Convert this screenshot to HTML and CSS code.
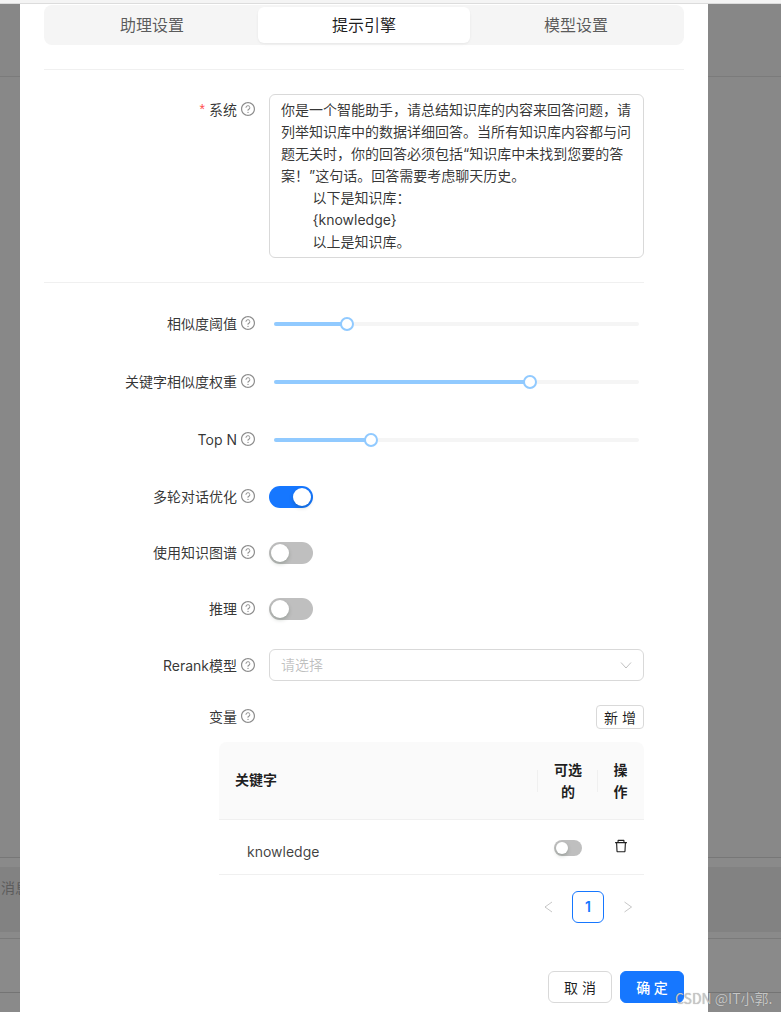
FILE: index.html
```html
<!DOCTYPE html>
<html lang="zh-CN">
<head>
  <meta charset="UTF-8" />
  <title>提示引擎</title>
  <link rel="stylesheet" href="styles.css">
</head>
<body>
  <svg class="icon-defs" width="0" height="0">
    <symbol id="help" viewBox="64 64 896 896">
      <path d="M512 64C264.6 64 64 264.6 64 512s200.6 448 448 448 448-200.6 448-448S759.4 64 512 64zm0 820c-205.4 0-372-166.6-372-372s166.6-372 372-372 372 166.6 372 372-166.6 372-372 372z"/>
      <path d="M623.6 316.7C593.6 290.4 554 276 512 276s-81.6 14.5-111.6 40.7C369.2 344 352 380.7 352 420v7.6c0 4.4 3.6 8 8 8h48c4.4 0 8-3.6 8-8V420c0-44.1 43.1-80 96-80s96 35.9 96 80c0 31.1-22 59.6-56.1 72.7-21.2 8.1-39.2 22.3-52.1 40.9-13.1 19-19.9 41.8-19.9 65.1V620c0 4.4 3.6 8 8 8h48c4.4 0 8-3.6 8-8v-21.3c0-17 10.8-32.5 26.8-38.6 54.5-21 89.6-70.3 89.6-125.1.1-39.3-17.1-76-48.3-103.3z"/>
      <path d="M512 732m-40 0a40 40 0 1 0 80 0 40 40 0 1 0-80 0z"/>
    </symbol>
  </svg>

  <!-- page behind the dialog -->
  <div class="page">
    <div class="browser-bar"></div>
    <div class="page-header"></div>
    <div class="page-main"></div>
    <div class="page-chat">
      <div class="chat-input">消息</div>
    </div>
    <div class="page-footer"></div>
  </div>

  <div class="modal">
    <div class="tabs">
      <div class="tab">助理设置</div>
      <div class="tab active">提示引擎</div>
      <div class="tab">模型设置</div>
    </div>
    <div class="divider tabs-divider"></div>

    <div class="form-row system-row">
      <div class="label raised"><span class="required">*</span>系统<svg class="help"><use href="#help"/></svg></div>
      <textarea class="system-input" readonly>你是一个智能助手，请总结知识库的内容来回答问题，请列举知识库中的数据详细回答。当所有知识库内容都与问题无关时，你的回答必须包括“知识库中未找到您要的答案！”这句话。回答需要考虑聊天历史。
        以下是知识库：
        {knowledge}
        以上是知识库。</textarea>
    </div>
    <div class="divider form-divider"></div>

    <div class="form-row slider-row">
      <div class="label">相似度阈值<svg class="help"><use href="#help"/></svg></div>
      <div class="slider"><div class="track"><div class="fill" style="width: 20%"><span class="handle"></span></div></div></div>
    </div>
    <div class="form-row slider-row">
      <div class="label">关键字相似度权重<svg class="help"><use href="#help"/></svg></div>
      <div class="slider"><div class="track"><div class="fill" style="width: 70%"><span class="handle"></span></div></div></div>
    </div>
    <div class="form-row slider-row">
      <div class="label">Top N<svg class="help"><use href="#help"/></svg></div>
      <div class="slider"><div class="track"><div class="fill" style="width: 26.6%"><span class="handle"></span></div></div></div>
    </div>

    <div class="form-row switch-row">
      <div class="label raised">多轮对话优化<svg class="help"><use href="#help"/></svg></div>
      <div class="switch on"><span class="knob"></span></div>
    </div>
    <div class="form-row switch-row">
      <div class="label raised">使用知识图谱<svg class="help"><use href="#help"/></svg></div>
      <div class="switch"><span class="knob"></span></div>
    </div>
    <div class="form-row switch-row">
      <div class="label raised">推理<svg class="help"><use href="#help"/></svg></div>
      <div class="switch"><span class="knob"></span></div>
    </div>

    <div class="form-row select-row">
      <div class="label">Rerank模型<svg class="help"><use href="#help"/></svg></div>
      <div class="select">
        <span class="placeholder">请选择</span>
        <svg class="chevron" width="12" height="12" viewBox="0 0 12 12"><polyline points="1,3.5 6,9 11,3.5"/></svg>
      </div>
    </div>

    <div class="form-row variable-row">
      <div class="label variable-label">变量<svg class="help"><use href="#help"/></svg></div>
      <button class="add-btn">新 增</button>
    </div>

    <div class="table">
      <div class="table-head">
        <div class="cell cell-key">关键字</div>
        <div class="cell cell-optional">可选的</div>
        <div class="cell cell-action">操作</div>
      </div>
      <div class="table-row">
        <div class="cell cell-key">knowledge</div>
        <div class="cell cell-optional"><div class="switch small"><span class="knob"></span></div></div>
        <div class="cell cell-action">
          <svg class="trash" viewBox="64 64 896 896"><path d="M360 184h-8c4.4 0 8-3.6 8-8v8h304v-8c0 4.4 3.6 8 8 8h-8v72h72v-80c0-35.3-28.7-64-64-64H352c-35.3 0-64 28.7-64 64v80h72v-72zm504 72H160c-17.7 0-32 14.3-32 32v32c0 4.4 3.6 8 8 8h60.4l24.7 523c1.6 34.1 29.8 61 63.9 61h454c34.2 0 62.3-26.8 63.9-61l24.7-523H888c4.4 0 8-3.6 8-8v-32c0-17.7-14.3-32-32-32zM731.3 840H292.7l-24.2-512h487l-24.2 512z"/></svg>
        </div>
      </div>
    </div>

    <div class="pagination">
      <svg class="page-arrow" viewBox="0 0 32 12"><polyline points="20,1 13,6 20,11"/></svg>
      <div class="page-num">1</div>
      <svg class="page-arrow" viewBox="0 0 32 12"><polyline points="12.5,1 19.5,6 12.5,11"/></svg>
    </div>

    <div class="modal-footer">
      <button class="btn">取 消</button>
      <button class="btn primary">确 定</button>
    </div>
  </div>

  <div class="watermark">CSDN @IT小郭.</div>
</body>
</html>
```

FILE: styles.css
```css
* {
  box-sizing: border-box;
}

html,
body {
  margin: 0;
  padding: 0;
  height: 1012px;
  overflow: hidden;
}

body {
  position: relative;
  font-family: Inter, "Noto Sans CJK SC", sans-serif;
  font-size: 14px;
  color: rgba(0, 0, 0, 0.88);
  background: #8a8a8a;
}

.icon-defs {
  position: absolute;
}

/* page behind the dialog */
.page {
  display: flex;
  flex-direction: column;
  height: 1012px;
}

.browser-bar {
  height: 4px;
  background: #f4f4f4;
  border-bottom: 1px solid #dcdcdc;
}

.page-header {
  height: 73px;
  border-bottom: 1px solid #7b7b7b;
  background: #878787;
}

.page-main {
  height: 781px;
  border-bottom: 1px solid #777;
  background: #888;
}

.page-chat {
  height: 81px;
  padding-top: 9px;
  border-bottom: 1px solid #7a7a7a;
}

.chat-input {
  height: 65px;
  padding: 10px 0 0 1px;
  font-size: 14px;
  line-height: 22px;
  color: #5c5c5c;
  background: #828282;
}

.page-footer {
  height: 54px;
  border-bottom: 1px solid #747474;
}

/* dialog */
.modal {
  position: absolute;
  top: 4px;
  left: 20px;
  width: 688px;
  height: 1008px;
  padding: 1px 24px 0;
  background: #fff;
}

.tabs {
  display: flex;
  height: 40px;
  padding: 2px;
  background: #f5f5f5;
  border-radius: 8px;
}

.tab {
  flex: 1;
  height: 36px;
  line-height: 37px;
  text-align: center;
  font-size: 16px;
  color: rgba(0, 0, 0, 0.65);
  border-radius: 6px;
}

.tab.active {
  color: rgba(0, 0, 0, 0.88);
  background: #fff;
  box-shadow: 0 1px 2px rgba(0, 0, 0, 0.03), 0 1px 6px -1px rgba(0, 0, 0, 0.02), 0 2px 4px rgba(0, 0, 0, 0.02);
}

.divider {
  height: 1px;
  background: #f0f0f0;
}

.tabs-divider {
  margin: 24px 0;
}

.form-divider {
  width: 600px;
  margin-top: 24px;
}

/* form rows */
.form-row {
  display: flex;
  margin-top: 24px;
}

.label {
  flex: none;
  display: flex;
  align-items: center;
  justify-content: flex-end;
  width: 211px;
  height: 32px;
  margin-right: 14px;
  color: rgba(0, 0, 0, 0.8);
  white-space: nowrap;
}

.label.raised {
  padding-bottom: 2px;
}

.variable-label {
  padding-bottom: 3px;
}

.required {
  margin-right: 4px;
  font-family: "Liberation Sans", sans-serif;
  color: #ff4d4f;
}

.help {
  width: 14px;
  height: 14px;
  margin-left: 4px;
  fill: rgba(0, 0, 0, 0.45);
}

.system-row {
  margin-top: 0;
}

.system-input {
  display: block;
  width: 375px;
  height: 164px;
  margin: 0;
  padding: 4px 11px;
  font: inherit;
  line-height: 22px;
  color: rgba(0, 0, 0, 0.8);
  border: 1px solid #d9d9d9;
  border-radius: 6px;
  outline: none;
  overflow: hidden;
  resize: none;
}

.slider-row {
  margin-top: 26px;
}

.form-divider + .slider-row {
  margin-top: 24px;
}

.slider {
  display: flex;
  align-items: center;
  width: 375px;
  height: 32px;
  padding: 1px 5px 0;
}

.track {
  width: 100%;
  height: 4px;
  background: #f5f5f5;
  border-radius: 2px;
}

.fill {
  position: relative;
  height: 4px;
  background: #91caff;
  border-radius: 2px;
}

.handle {
  position: absolute;
  top: -5px;
  right: -7px;
  width: 14px;
  height: 14px;
  background: #fff;
  border: 2px solid #91caff;
  border-radius: 50%;
}

.switch-row {
  align-items: center;
}

.slider-row + .switch-row {
  margin-top: 26px;
}

.switch {
  position: relative;
  width: 44px;
  height: 22px;
  background: #bfbfbf;
  border-radius: 11px;
}

.switch.on {
  background: #1677ff;
}

.knob {
  position: absolute;
  top: 2px;
  left: 2px;
  width: 18px;
  height: 18px;
  background: #fff;
  border-radius: 50%;
  box-shadow: 0 2px 4px rgba(0, 35, 11, 0.2);
}

.switch.on .knob {
  left: 24px;
}

.switch.small {
  width: 28px;
  height: 16px;
  margin: 0 auto;
}

.switch.small .knob {
  width: 12px;
  height: 12px;
}

.select {
  display: flex;
  align-items: center;
  justify-content: space-between;
  width: 375px;
  height: 32px;
  padding: 0 11px;
  color: rgba(0, 0, 0, 0.25);
  border: 1px solid #d9d9d9;
  border-radius: 6px;
}

.placeholder {
  margin-top: -2px;
}

.chevron {
  fill: none;
  stroke: rgba(0, 0, 0, 0.25);
  stroke-width: 1;
}

.variable-row {
  justify-content: space-between;
  align-items: center;
  width: 600px;
  height: 24px;
}

.add-btn {
  width: 48px;
  height: 24px;
  padding: 0;
  font: inherit;
  color: rgba(0, 0, 0, 0.88);
  background: #fff;
  border: 1px solid #d9d9d9;
  border-radius: 4px;
}

/* variables table */
.table {
  width: 425px;
  margin: 13px 0 0 175px;
}

.table-head,
.table-row {
  display: flex;
  border-bottom: 1px solid #f0f0f0;
}

.table-head {
  align-items: center;
  height: 78px;
  font-weight: 600;
  background: #fafafa;
  border-radius: 8px 8px 0 0;
}

.table-row {
  height: 55px;
  color: rgba(0, 0, 0, 0.75);
}

.cell-key {
  width: 318px;
  padding-left: 16px;
}

.table-head .cell-key {
  padding-bottom: 3px;
}

.cell-optional {
  width: 60px;
  padding: 0 15px 0 17px;
  text-align: center;
  line-height: 22px;
}

.cell-action {
  width: 47px;
  padding: 0 15px;
  text-align: center;
  line-height: 22px;
}

.table-head .cell-optional,
.table-head .cell-action {
  position: relative;
}

.table-head .cell-optional::before,
.table-head .cell-action::before {
  content: "";
  position: absolute;
  top: 50%;
  left: 0;
  width: 1px;
  height: 22px;
  margin-top: -11px;
  background: #f0f0f0;
}

.table-row .cell-key {
  padding: 21px 0 0 28px;
  line-height: 22px;
}

.table-row .cell-optional {
  padding-top: 20px;
}

.table-row .cell-action {
  padding-top: 19px;
  line-height: 14px;
}

.trash {
  display: block;
  width: 14px;
  height: 14px;
  margin: 0 auto;
  fill: rgba(0, 0, 0, 0.88);
}

/* pagination */
.pagination {
  display: flex;
  align-items: center;
  justify-content: flex-end;
  gap: 8px;
  width: 600px;
  margin-top: 16px;
}

.page-arrow {
  width: 32px;
  height: 12px;
  fill: none;
  stroke: rgba(0, 0, 0, 0.22);
  stroke-width: 1;
}

.page-num {
  width: 32px;
  height: 32px;
  line-height: 30px;
  text-align: center;
  font-weight: 600;
  color: #1677ff;
  border: 1px solid #1677ff;
  border-radius: 6px;
}

/* footer */
.modal-footer {
  display: flex;
  justify-content: flex-end;
  gap: 8px;
  margin-top: 48px;
}

.btn {
  width: 64px;
  height: 32px;
  padding: 0;
  font: inherit;
  color: rgba(0, 0, 0, 0.88);
  background: #fff;
  border: 1px solid #d9d9d9;
  border-radius: 6px;
}

.btn.primary {
  font-weight: 500;
  color: #fff;
  background: #1677ff;
  border-color: #1677ff;
}

.watermark {
  position: absolute;
  top: 988px;
  left: 675px;
  font-family: "Noto Sans CJK SC", sans-serif;
  font-size: 14px;
  line-height: 20px;
  white-space: nowrap;
  color: #c6c6c6;
  text-shadow: 0 0 1px rgba(0, 0, 0, 0.3);
}
```
